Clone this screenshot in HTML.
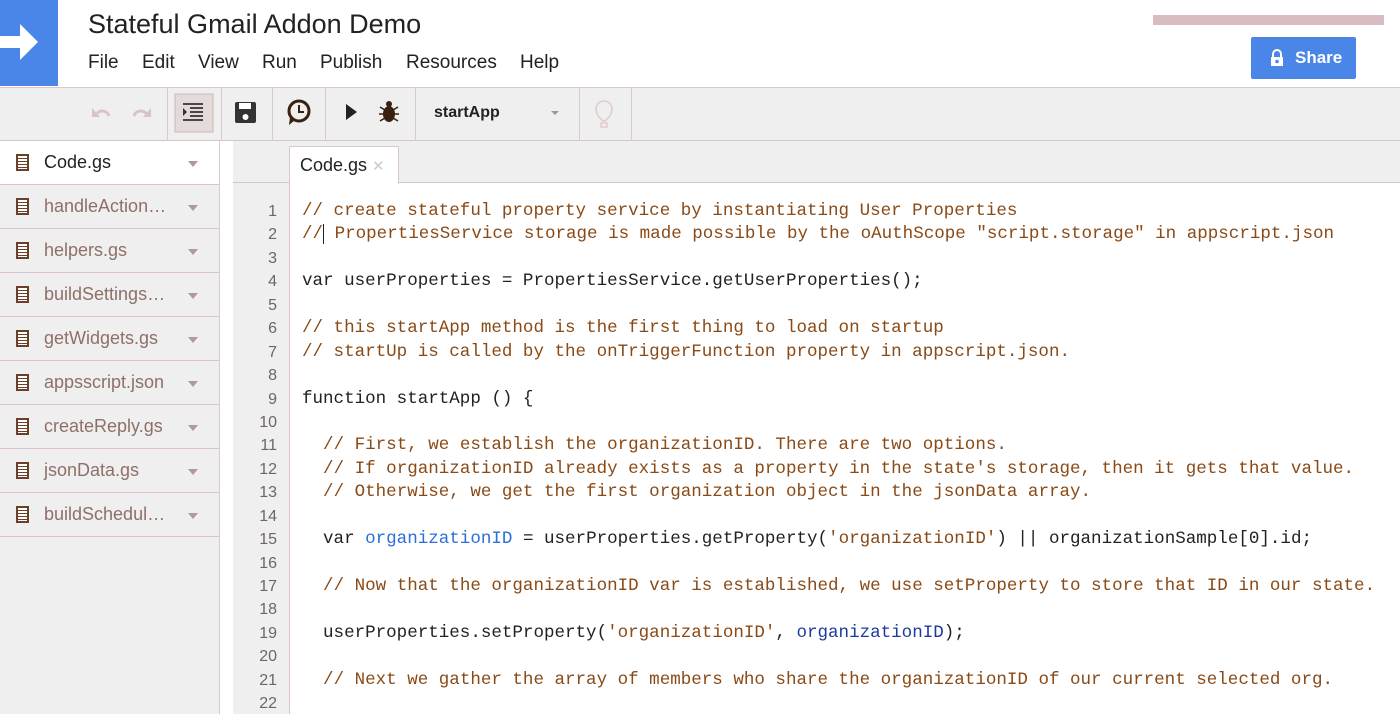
<!DOCTYPE html>
<html><head><meta charset="utf-8"><style>
*{margin:0;padding:0;box-sizing:border-box}
body{width:1400px;height:714px;overflow:hidden;background:#fff;font-family:"Liberation Sans",Arial,sans-serif;position:relative}
.abs{position:absolute}
#logo{left:0;top:0;width:58px;height:86px;background:#4a86e8}
#title{left:88px;top:9px;font-size:27px;color:#222}
#menu{left:88px;top:52px;font-size:19px;color:#222;white-space:nowrap}
#menu span{position:absolute;top:0}
#acct{left:1153px;top:15px;width:231px;height:10px;background:#d9bcc2}
#share{left:1251px;top:37px;width:105px;height:42px;background:#4a86e8;border-radius:2px;color:#fff;font-weight:bold;font-size:17px;line-height:42px;padding-left:44px}
#tb{left:0;top:87px;width:1400px;height:54px;background:#efefef;border-top:1px solid #dcc8cc;border-bottom:1px solid #d6c4c8}
.sep{position:absolute;top:0;width:1px;height:53px;background:#d8cacc}
#side{left:0;top:141px;width:220px;height:573px;background:#efefef;border-right:1px solid #dcc8cc}
.f{height:44px;border-bottom:1px solid #dcc4c8;font-size:18px;color:#8e7068;line-height:43px;padding-left:44px;position:relative}
.f.act{background:#fff;color:#222}
.f .ic{position:absolute;left:16px;top:13px;width:13px;height:17px;border:2px solid #6b3f2a;background:repeating-linear-gradient(#fff 0 2px,#6b3f2a 2px 3px)}
.f .ar{position:absolute;left:188px;top:20px;border:5px solid transparent;border-top:6px solid #b09a98}
#tabbar{left:233px;top:141px;width:1167px;height:42px;background:#efefef;border-bottom:1px solid #d8c4c8}
#tab{left:289px;top:146px;width:110px;height:38px;background:#fff;border:1px solid #dcc8cc;border-bottom:none;font-size:18px;color:#222;padding:8px 0 0 10px}
#gut{left:233px;top:183px;width:57px;height:531px;background:#efefef;border-right:1px solid #dcc4c8}
.code{font-family:"Liberation Mono",monospace;font-size:17.55px;line-height:23.43px;white-space:pre}
#nums{left:233px;top:200px;width:44px;text-align:right;color:#6e6662;font-family:"Liberation Sans",sans-serif;font-size:16px}
#src{left:302px;top:200px;color:#222}
.c{color:#8a4a16}.s{color:#8a4a16}.b{color:#2a70d8}.d{color:#1c3c9c}
</style></head><body>
<div class="abs" id="logo"><svg width="58" height="86"><path d="M0 36h20v-12l18 18-18 18v-12H0z" fill="#fff"/></svg></div>
<div class="abs" id="title">Stateful Gmail Addon Demo</div>
<div class="abs" id="menu"><span style="left:0">File</span><span style="left:54px">Edit</span><span style="left:110px">View</span><span style="left:174px">Run</span><span style="left:232px">Publish</span><span style="left:318px">Resources</span><span style="left:432px">Help</span></div>
<div class="abs" id="acct"></div>
<div class="abs" id="share"><svg class="abs" style="left:19px;top:12px" width="14" height="18"><path d="M3 8V5a4 4 0 0 1 8 0v3" stroke="#fff" stroke-width="2" fill="none"/><rect x="1" y="8" width="12" height="9" fill="#fff"/><circle cx="7" cy="12.5" r="1.8" fill="#4a86e8"/></svg>Share</div>
<div class="abs" id="tb">
<div class="sep" style="left:167px"></div><div class="sep" style="left:221px"></div><div class="sep" style="left:272px"></div><div class="sep" style="left:325px"></div><div class="sep" style="left:415px"></div><div class="sep" style="left:579px"></div><div class="sep" style="left:631px"></div>
<svg class="abs" style="left:0;top:0" width="640" height="53">
<path d="M96 27a7 7 0 0 1 13 1" stroke="#d8c4c4" stroke-width="3" fill="none"/><path d="M92 20v9h8z" fill="#d8c4c4"/>
<path d="M147 27a7 7 0 0 0-13 1" stroke="#d8c4c4" stroke-width="3" fill="none"/><path d="M151 20v9h-8z" fill="#d8c4c4"/>
<rect x="175" y="6" width="38" height="38" fill="#e4dada" stroke="#cdb8b8"/>
<path d="M183 16h20M190 20h13M190 24h13M190 28h13M183 32h20" stroke="#333" stroke-width="1.8"/><path d="M183 20l4 4-4 4z" fill="#333"/>
<rect x="235" y="14" width="21" height="21" rx="2" fill="#333"/><rect x="239" y="15" width="12" height="6" fill="#fff"/><circle cx="245.5" cy="29" r="3" fill="#fff"/>
<circle cx="299" cy="23" r="10" stroke="#3a2010" stroke-width="3" fill="none"/><path d="M299 17v7h5" stroke="#3a2010" stroke-width="2" fill="none"/><path d="M290 29l-1 8 6-5z" fill="#3a2010"/>
<path d="M346 16l11 8-11 8z" fill="#222"/>
<ellipse cx="389" cy="26" rx="6" ry="8" fill="#3a2010"/><circle cx="389" cy="16" r="3" fill="#3a2010"/><path d="M380 19l5 3M398 19l-5 3M379 26h5M399 26h-5M380 33l5-3M398 33l-5-3" stroke="#3a2010" stroke-width="1.5"/>
<path d="M551 23l4 4 4-4z" fill="#999"/>
<path d="M603 33c-5-4-7-8-7-12a8 8 0 0 1 16 0c0 4-2 8-7 12zM601 35h6v4h-6z" stroke="#e0cccc" stroke-width="1.6" fill="none"/>
</svg>
<div class="abs" style="left:434px;top:16px;font-weight:bold;font-size:16px;color:#222">startApp</div>
</div>
<div class="abs" id="side">
<div class="f act"><i class="ic"></i>Code.gs<i class="ar"></i></div>
<div class="f"><i class="ic"></i>handleAction…<i class="ar"></i></div>
<div class="f"><i class="ic"></i>helpers.gs<i class="ar"></i></div>
<div class="f"><i class="ic"></i>buildSettings…<i class="ar"></i></div>
<div class="f"><i class="ic"></i>getWidgets.gs<i class="ar"></i></div>
<div class="f"><i class="ic"></i>appsscript.json<i class="ar"></i></div>
<div class="f"><i class="ic"></i>createReply.gs<i class="ar"></i></div>
<div class="f"><i class="ic"></i>jsonData.gs<i class="ar"></i></div>
<div class="f"><i class="ic"></i>buildSchedul…<i class="ar"></i></div>
</div>
<div class="abs" id="tabbar"></div>
<div class="abs" id="tab">Code.gs <span style="color:#ccc;font-size:15px">✕</span></div>
<div class="abs" id="gut"></div>
<div class="abs code" id="nums">1
2
3
4
5
6
7
8
9
10
11
12
13
14
15
16
17
18
19
20
21
22</div>
<div class="abs code" id="src"><span class="c">// create stateful property service by instantiating User Properties</span>
<span class="c">//<span style="border-left:1px solid #222"></span> PropertiesService storage is made possible by the oAuthScope "script.storage" in appscript.json</span>

var userProperties = PropertiesService.getUserProperties();

<span class="c">// this startApp method is the first thing to load on startup</span>
<span class="c">// startUp is called by the onTriggerFunction property in appscript.json.</span>

function startApp () {

  <span class="c">// First, we establish the organizationID. There are two options.</span>
  <span class="c">// If organizationID already exists as a property in the state's storage, then it gets that value.</span>
  <span class="c">// Otherwise, we get the first organization object in the jsonData array.</span>

  var <span class="b">organizationID</span> = userProperties.getProperty(<span class="s">'organizationID'</span>) || organizationSample[0].id;

  <span class="c">// Now that the organizationID var is established, we use setProperty to store that ID in our state.</span>

  userProperties.setProperty(<span class="s">'organizationID'</span>, <span class="d">organizationID</span>);

  <span class="c">// Next we gather the array of members who share the organizationID of our current selected org.</span>
</div>
</body></html>
